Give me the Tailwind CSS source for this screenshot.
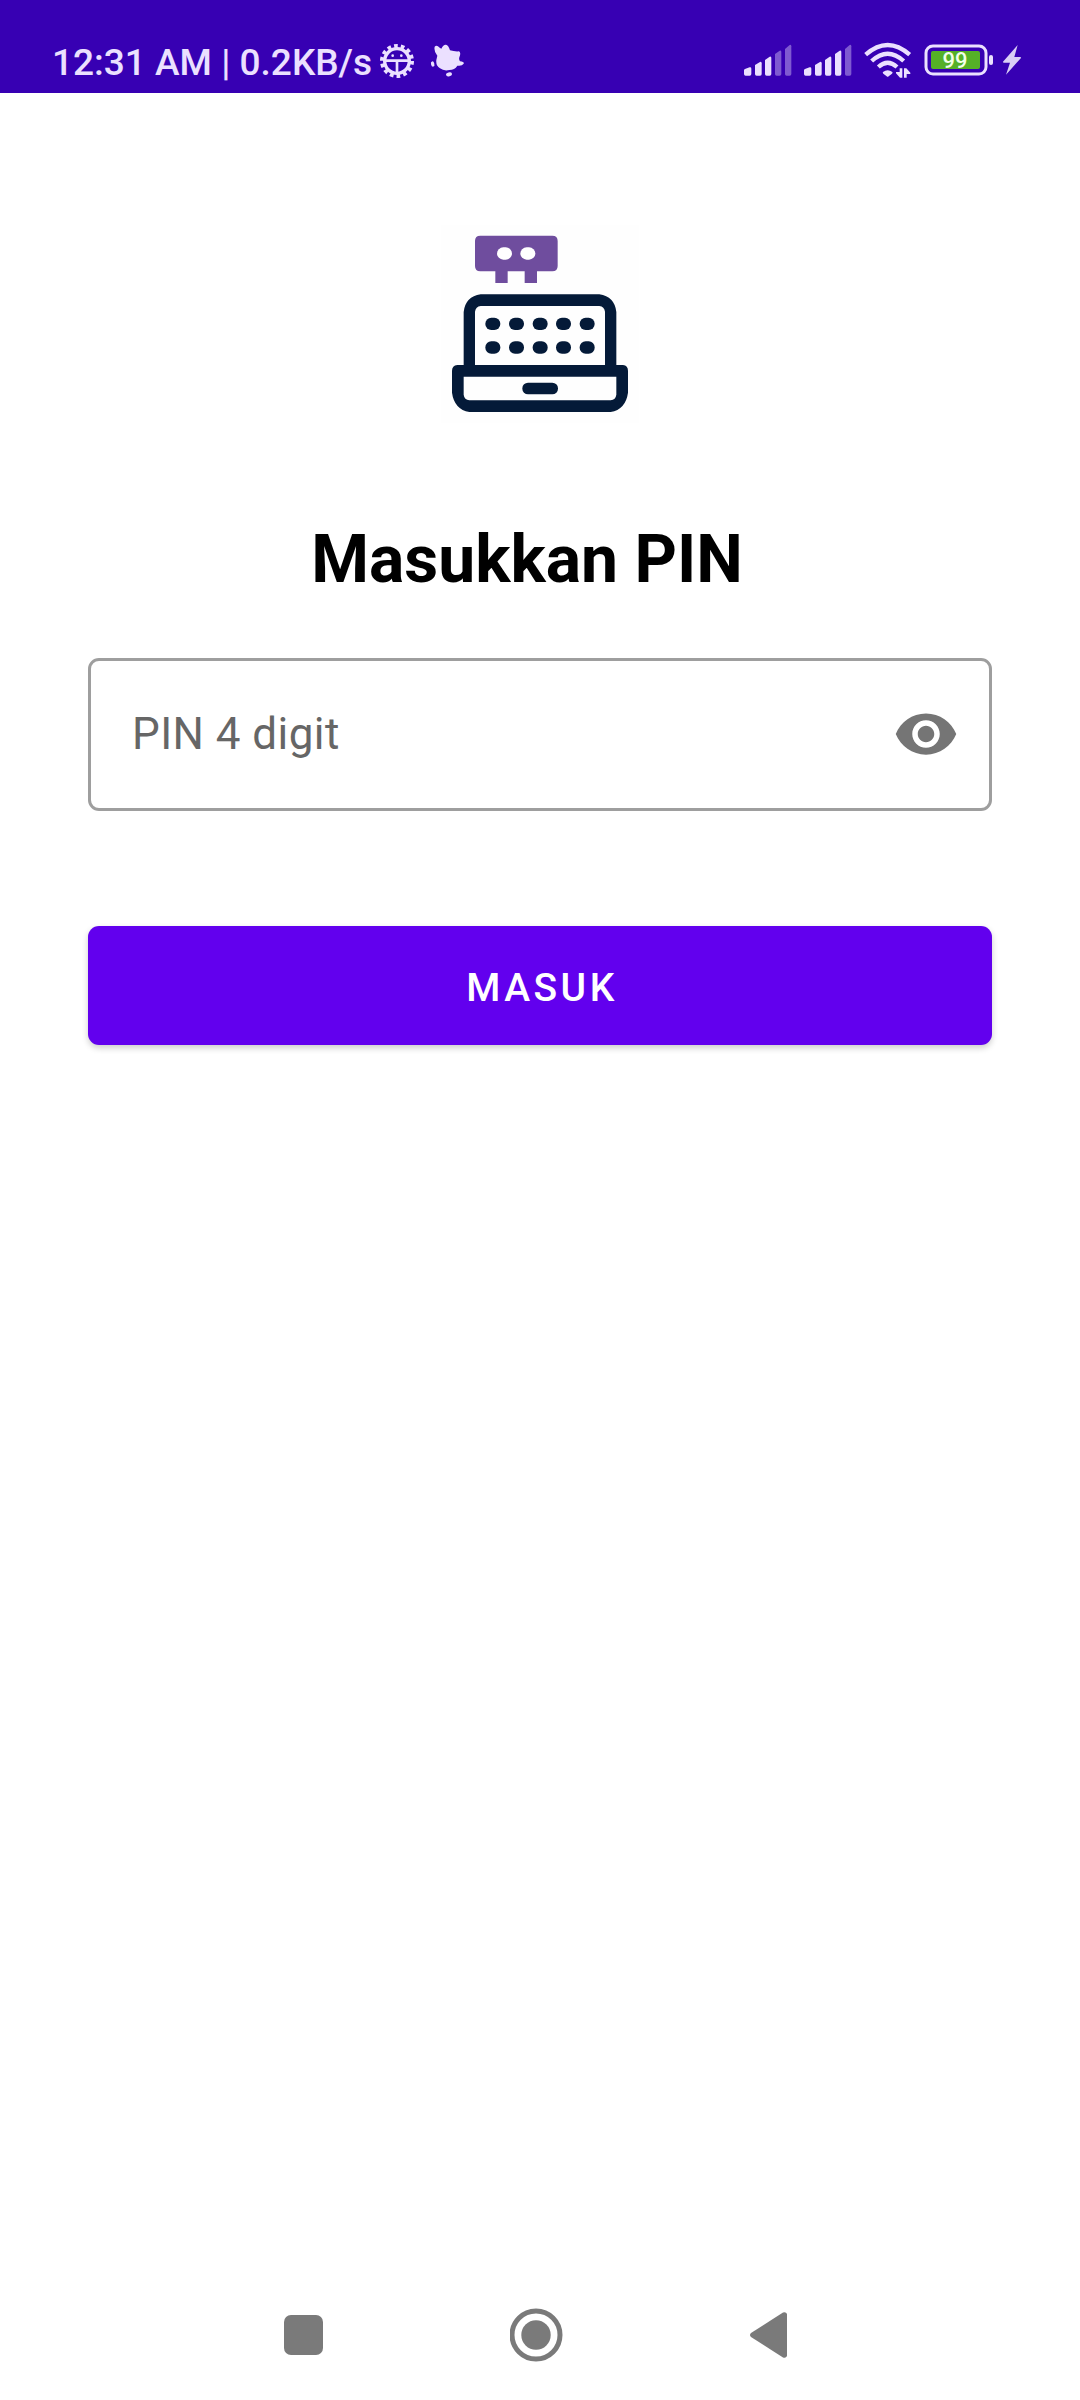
<!DOCTYPE html>
<html lang="id">
<head>
<meta charset="utf-8">
<meta name="viewport" content="width=device-width, initial-scale=1">
<title>Masukkan PIN</title>
<script src="https://cdn.jsdelivr.net/npm/@tailwindcss/browser@4"></script>
</head>
<body class="flex min-h-screen flex-col bg-white font-['Roboto',sans-serif]">

<!-- Status bar -->
<header class="flex h-[93px] items-end justify-between bg-[#3700b3] pr-[58px] pl-[52px] text-[#ebe0ff]">
  <div class="flex items-center">
    <span class="pt-1 text-[37px] leading-[60px] font-medium whitespace-nowrap">12:31 AM | 0.2KB/s</span>
    <svg class="ml-2 h-[34px] w-[34px]" viewBox="0 0 102 102" fill="none" stroke="currentColor" aria-hidden="true">
      <circle cx="51" cy="51" r="37" stroke-width="10"/>
      <circle cx="51" cy="51" r="45" stroke-width="12" stroke-dasharray="11 9.196"/>
      <path d="M16 50H86M51 50V86" stroke-width="8"/>
      <circle cx="38" cy="35" r="4" fill="currentColor" stroke="none"/>
      <circle cx="64" cy="35" r="4" fill="currentColor" stroke="none"/>
    </svg>
    <svg class="ml-4 h-[34px] w-[34px]" viewBox="0 0 102 102" fill="currentColor" aria-hidden="true">
      <path d="M14 8Q20 2 29 11L34 14Q40 1 48 2Q55 3 60 19Q73 23 87 22Q94 26 88 40Q86 46 90 52Q104 54 101 59Q96 67 82 65Q74 78 58 78Q42 82 30 73Q17 64 19 48L22 35Q11 23 14 8Z"/>
      <ellipse cx="8" cy="60" rx="5" ry="8" transform="rotate(-15 8 60)"/>
      <ellipse cx="57" cy="91" rx="9" ry="6" transform="rotate(-15 57 91)"/>
    </svg>
  </div>
  <div class="flex h-[66px] items-center gap-3">
    <svg class="h-8 w-12" viewBox="0 0 144 96" fill="currentColor" aria-hidden="true">
      <path d="M0 79Q0 76 3 75L17 70Q22 69 22 74V90Q22 95 17 95H5Q0 95 0 90Z"/>
      <path d="M33 63L48 54Q53 52 53 58V90Q53 95 48 95H38Q33 95 33 90Z"/>
      <path d="M63 48L77 38Q82 36 82 42V90Q82 95 77 95H68Q63 95 63 90Z"/>
      <g opacity=".4"><path d="M93 30L107 20Q112 18 112 24V90Q112 95 107 95H98Q93 95 93 90Z"/><path d="M123 15L137 3Q142 1 142 7V90Q142 95 137 95H128Q123 95 123 90Z"/></g>
    </svg>
    <svg class="h-8 w-12" viewBox="0 0 144 96" fill="currentColor" aria-hidden="true">
      <path d="M0 79Q0 76 3 75L17 70Q22 69 22 74V90Q22 95 17 95H5Q0 95 0 90Z"/>
      <path d="M33 63L48 54Q53 52 53 58V90Q53 95 48 95H38Q33 95 33 90Z"/>
      <path d="M63 48L77 38Q82 36 82 42V90Q82 95 77 95H68Q63 95 63 90Z"/>
      <path d="M93 30L107 20Q112 18 112 24V90Q112 95 107 95H98Q93 95 93 90Z"/>
      <path opacity=".4" d="M123 15L137 3Q142 1 142 7V90Q142 95 137 95H128Q123 95 123 90Z"/>
    </svg>
    <svg class="h-9 w-12" viewBox="0 0 144 108" fill="none" stroke="currentColor" stroke-width="13" aria-hidden="true">
      <path d="M5 38Q71 -20 137 38M23 57Q71 13 119 57M43 75Q71 50 99 75"/>
      <path fill="currentColor" stroke="none" d="M57 90Q71 79 85 90Q87 92 84 95L74 103Q71 106 68 103L58 95Q55 92 57 90ZM107 79H115V107H108L96 94V90H107ZM120 107V79H127L139 92V96H128V107Z"/>
    </svg>
    <svg class="h-8 w-[70px]" viewBox="0 0 70 32" role="img" aria-label="99%">
      <rect x="2" y="2" width="60" height="28" rx="7" fill="none" stroke="currentColor" stroke-width="3"/>
      <rect x="7" y="7" width="49" height="18" rx="2" fill="#55b027"/>
      <rect x="65" y="11" width="4" height="10" rx="2" fill="currentColor"/>
      <text x="31" y="24" text-anchor="middle" font-size="22" font-weight="500" fill="#f2ffe8">99</text>
    </svg>
    <svg class="-ml-1 h-[30px] w-5" viewBox="0 0 60 90" fill="#d9cef5" aria-hidden="true">
      <path d="M47 0L3 50Q2 53 6 53H24L12 89L57 39Q58 36 54 36H37Z"/>
    </svg>
  </div>
</header>

<main class="flex flex-1 flex-col px-[88px] pt-[127px]">
  <!-- App logo -->
  <svg class="h-[210px] w-[220px] self-center" viewBox="0 0 660 630" role="img" aria-label="Logo">
    <rect x="33" y="15" width="594" height="594" fill="#fefefe"/>
    <path fill="#6f4d9e" d="M151 47H367Q383 47 383 63V138Q383 154 367 154H321V189H284V154H233V189H196V154H151Q135 154 135 138V63Q135 47 151 47Z"/>
    <rect x="201" y="82" width="45" height="37" rx="19" fill="#fff"/>
    <rect x="271" y="82" width="45" height="37" rx="19" fill="#fff"/>
    <g fill="#041a38">
      <path fill-rule="evenodd" d="M101 435V276Q106 230 152 223H508Q554 230 559 276V435H579Q594 437 594 453V518Q587 568 542 576H118Q73 568 66 518V453Q66 437 82 435ZM135 435H525V275Q523 260 508 258H152Q137 260 135 275ZM101 470V524Q103 539 118 541H542Q557 539 559 524V470Z"/>
      <rect x="277" y="488" width="107" height="35" rx="17"/>
      <rect x="166" y="293" width="45" height="37" rx="18"/>
      <rect x="237" y="293" width="45" height="37" rx="18"/>
      <rect x="308" y="293" width="45" height="37" rx="18"/>
      <rect x="378" y="293" width="45" height="37" rx="18"/>
      <rect x="449" y="293" width="45" height="37" rx="18"/>
      <rect x="166" y="364" width="45" height="37" rx="18"/>
      <rect x="237" y="364" width="45" height="37" rx="18"/>
      <rect x="308" y="364" width="45" height="37" rx="18"/>
      <rect x="378" y="364" width="45" height="37" rx="18"/>
      <rect x="449" y="364" width="45" height="37" rx="18"/>
    </g>
  </svg>

  <h1 class="mt-[90px] pr-[26px] text-center text-[66px] leading-[80px] font-bold text-black">Masukkan PIN</h1>

  <form class="mt-[58px] flex flex-col">
    <div class="flex h-[153px] items-center rounded-[11px] border-3 border-[#9e9e9e] pr-[30px] pb-[2px] pl-[41px]">
      <input id="pin" type="password" inputmode="numeric" maxlength="4" aria-label="PIN 4 digit" placeholder="PIN 4 digit" class="min-w-0 flex-1 text-[44px] leading-[60px] tracking-[0.01em] text-black outline-none placeholder:text-[#666666]">
      <button type="button" aria-label="Tampilkan PIN" class="shrink-0">
        <svg class="h-[66px] w-[66px]" viewBox="0 0 24 24" fill="#757575" aria-hidden="true"><path d="M12 4.5C7 4.5 2.73 7.61 1 12c1.73 4.39 6 7.5 11 7.5s9.27-3.11 11-7.5c-1.73-4.39-6-7.5-11-7.5zM12 17c-2.76 0-5-2.24-5-5s2.24-5 5-5 5 2.24 5 5-2.24 5-5 5zm0-8c-1.66 0-3 1.34-3 3s1.34 3 3 3 3-1.34 3-3-1.34-3-3-3z"/></svg>
      </button>
    </div>
    <button type="submit" class="mt-[115px] h-[119px] rounded-[11px] bg-[#6200ee] pt-1 pl-1 text-[39px] leading-[50px] font-medium tracking-[0.09em] text-white shadow-[0_3px_6px_rgba(0,0,0,0.2)]">MASUK</button>
  </form>
</main>

<!-- System navigation -->
<nav class="flex h-[130px] items-center justify-between pr-[282px] pl-[276px]" aria-label="Navigasi sistem">
  <button type="button" aria-label="Aplikasi terbaru"><svg class="h-[54px] w-[54px]" viewBox="0 0 54 54" fill="#7a7a7a"><rect x="8" y="7" width="39" height="40" rx="7"/></svg></button>
  <button type="button" aria-label="Beranda"><svg class="h-[54px] w-[54px]" viewBox="0 0 54 54" fill="#7a7a7a"><circle cx="26" cy="27" r="24" fill="none" stroke="#7a7a7a" stroke-width="5"/><circle cx="26" cy="27" r="14.7"/></svg></button>
  <button type="button" aria-label="Kembali"><svg class="h-[54px] w-[54px]" viewBox="0 0 54 54" fill="#7a7a7a"><path d="M7 25L39 4.500Q42 3.500 43 6V48Q42 50.500 39 49.500L7 29Q5 27 7 25Z"/></svg></button>
</nav>
</body>
</html>
